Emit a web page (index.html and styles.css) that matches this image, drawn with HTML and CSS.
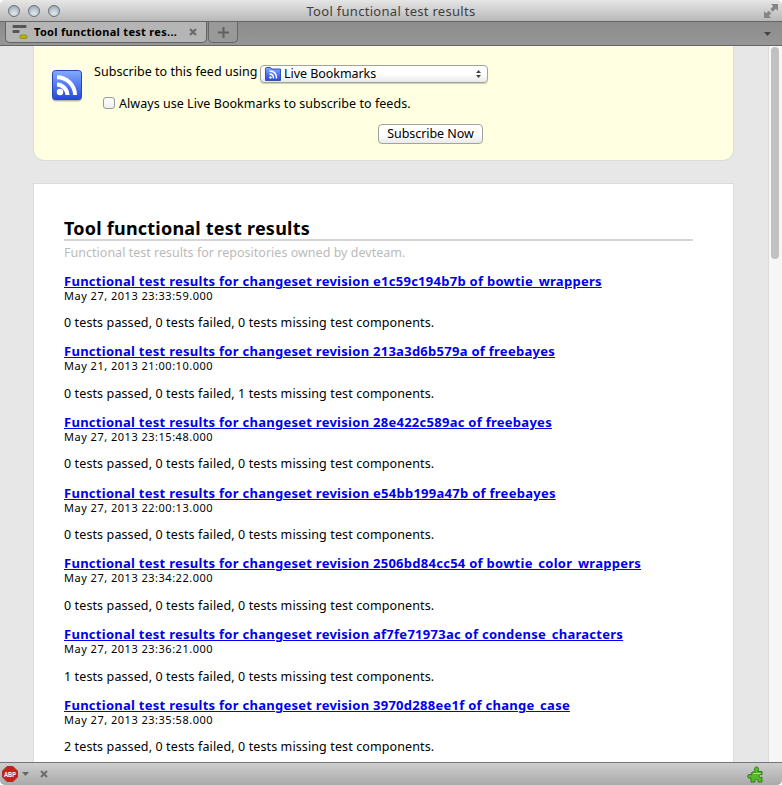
FILE: index.html
```html
<!DOCTYPE html>
<html lang="en">
<head>
<meta charset="utf-8">
<title>Tool functional test results</title>
<link rel="stylesheet" href="styles.css">
</head>
<body>
<div class="window">
  <header class="titlebar">
    <div class="lights"><i></i><i></i><i></i></div>
    <span class="window-title">Tool functional test results</span>
    <svg class="fullscreen" width="14" height="14" viewBox="0 0 14 14"><path d="M7 0h7v7l-2.200-2.200-3 3-2.600-2.600 3-3zM0 7l2.200 2.200 2.500-2.500 2.600 2.600-2.500 2.500L7 14H0z" fill="#858585"/></svg>
  </header>
  <nav class="tabs">
    <div class="tab">
      <svg width="16" height="16" viewBox="0 0 16 16"><rect x="0.500" y="1" width="14" height="3" rx="1" fill="#555"/><rect x="0.500" y="6" width="7" height="3" rx="1" fill="#555"/><rect x="8" y="11" width="7" height="3.500" rx="1.500" fill="#b9b400" stroke="#777000" stroke-width=".6"/></svg>
      <span class="tab-label">Tool functional test res...</span>
      <svg class="close" width="8" height="8" viewBox="0 0 8 8"><path d="M1 1l6 6M7 1l-6 6" stroke="#686868" stroke-width="2"/></svg>
    </div>
    <div class="new-tab"><svg width="11" height="11" viewBox="0 0 11 11"><path d="M5.500 0v11M0 5.500h11" stroke="#606060" stroke-width="2"/></svg></div>
    <svg class="all-tabs" width="7" height="4" viewBox="0 0 7 4"><path d="M0 0h7L3.500 4z" fill="#444"/></svg>
  </nav>
  <main class="viewport">
    <div class="page">
      <section class="subscribe">
        <svg class="feed-icon" width="32" height="34" viewBox="0 0 32 34">
          <defs><linearGradient id="blue" x2="0" y2="1"><stop stop-color="#83adff"/><stop offset="1" stop-color="#2746dd"/></linearGradient></defs>
          <rect x="1" y="2" width="30" height="30.500" rx="4" fill="#8c8c80" opacity=".6"/>
          <rect x="1.500" y="1.500" width="29" height="29" rx="3" fill="url(#blue)" stroke="#2447b8"/>
          <circle cx="9" cy="23" r="3.200" fill="#fff"/><path d="M6 15.500a11 11 0 0 1 10.500 10.500M6 8.200a18 18 0 0 1 18 17.800" fill="none" stroke="#fff" stroke-width="4"/>
        </svg>
        <div class="controls">
          <div class="feed-row">
            <span class="feed-label">Subscribe to this feed using</span>
            <div class="select">
              <svg width="16" height="14" viewBox="0 0 16 14"><path d="M.5 1.500q0-1 1-1h4l1 1.500h9v11.500H.5z" fill="url(#blue)" stroke="#3354b8"/><circle cx="5.500" cy="10.500" r="1.200" fill="#fff"/><path d="M4.500 7q4 0 4 4.500M4.500 4q7 0 7 7.500" fill="none" stroke="#fff" stroke-width="1.500"/></svg>
              <span class="select-label">Live Bookmarks</span>
              <svg class="arrows" width="5" height="8" viewBox="0 0 5 8"><path d="M0 3L2.500 0 5 3zM0 5h5L2.500 8z" fill="#444"/></svg>
            </div>
          </div>
          <div class="always"><i class="checkbox"></i><span class="always-label">Always use Live Bookmarks to subscribe to feeds.</span></div>
          <div class="button"><span>Subscribe Now</span></div>
        </div>
      </section>
      <article class="feed">
        <h1><span>Tool functional test results</span></h1>
        <p class="subtitle">Functional test results for repositories owned by devteam.</p>
        <section class="entry"><h2><a>Functional test results for changeset revision e1c59c194b7b of bowtie_wrappers</a></h2><time>May 27, 2013 23:33:59.000</time><p>0 tests passed, 0 tests failed, 0 tests missing test components.</p></section>
        <section class="entry"><h2><a>Functional test results for changeset revision 213a3d6b579a of freebayes</a></h2><time>May 21, 2013 21:00:10.000</time><p>0 tests passed, 0 tests failed, 1 tests missing test components.</p></section>
        <section class="entry"><h2><a>Functional test results for changeset revision 28e422c589ac of freebayes</a></h2><time>May 27, 2013 23:15:48.000</time><p>0 tests passed, 0 tests failed, 0 tests missing test components.</p></section>
        <section class="entry"><h2><a>Functional test results for changeset revision e54bb199a47b of freebayes</a></h2><time>May 27, 2013 22:00:13.000</time><p>0 tests passed, 0 tests failed, 0 tests missing test components.</p></section>
        <section class="entry"><h2><a>Functional test results for changeset revision 2506bd84cc54 of bowtie_color_wrappers</a></h2><time>May 27, 2013 23:34:22.000</time><p>0 tests passed, 0 tests failed, 0 tests missing test components.</p></section>
        <section class="entry"><h2><a>Functional test results for changeset revision af7fe71973ac of condense_characters</a></h2><time>May 27, 2013 23:36:21.000</time><p>1 tests passed, 0 tests failed, 0 tests missing test components.</p></section>
        <section class="entry"><h2><a>Functional test results for changeset revision 3970d288ee1f of change_case</a></h2><time>May 27, 2013 23:35:58.000</time><p>2 tests passed, 0 tests failed, 0 tests missing test components.</p></section>
      </article>
    </div>
    <div class="scrollbar"><div class="thumb"></div></div>
  </main>
  <footer class="statusbar">
    <svg width="16" height="16" viewBox="0 0 16 16"><path d="M5 .5h6L15.500 5v6L11 15.500H5L.5 11V5z" fill="#c92018" stroke="#a03028"/><text class="abp" x="2" y="11" textLength="12" lengthAdjust="spacingAndGlyphs">ABP</text></svg>
    <svg class="menu-arrow" width="7" height="4" viewBox="0 0 7 4"><path d="M0 0h7L3.500 4z" fill="#666"/></svg>
    <svg class="status-close" width="8" height="8" viewBox="0 0 8 8"><path d="M1 1l6 6M7 1l-6 6" stroke="#6c6c6c" stroke-width="2"/></svg>
    <svg class="puzzle" width="17" height="17" viewBox="0 0 17 17"><path d="M5 6h3.500C7 4 7 1 9.500 1s2.500 3 1.300 4.500H15v3.200c-2-.8-3 .2-3 1.300s1 2 3 1.300V16h-4c.3-2-.5-2.800-1.600-2.800S7.500 14 8 16H4v-4.200c-1.800 1-3.300.3-3.300-1.500S2.500 8 4.500 9z" fill="#58b82c" stroke="#2d7d17"/><path d="M6 7.500h7.500" stroke="#a4e36d"/></svg>
  </footer>
</div>
</body>
</html>
```
FILE: styles.css
```css
* { box-sizing: border-box; }
body { margin: 0; background: #fff; font: 12.5px/18px "Noto Sans", sans-serif; color: #000; }
svg { display: block; flex: none; }
span, time { white-space: nowrap; }
i { display: block; flex: none; }
.window { width: 782px; height: 785px; display: flex; flex-direction: column; overflow: hidden; border-radius: 5px; background: #e7e7e7; }
.titlebar { flex: none; height: 22px; display: grid; grid-template-columns: 1fr auto 1fr; align-items: center; padding: 0 8px 0 8px; background: linear-gradient(#e6e6e6, #b8b8b8); border-bottom: 1px solid #666; }
.lights { display: flex; gap: 8px; }
.lights i { width: 12px; height: 12px; border-radius: 50%; border: 1px solid #68717a; background: radial-gradient(circle at 50% 75%, #e3eaf0, #92a0ab); }
.window-title { font-size: 13px; letter-spacing: 0.29px; color: #404040; }
.fullscreen { justify-self: end; margin-right: -4px; }
.tabs { flex: none; height: 24px; display: flex; align-items: flex-start; background: linear-gradient(#8c8c8c, #969696); border-bottom: 1px solid #666; padding: 0 11px 0 5px; }
.tab { width: 202px; height: 21px; display: flex; align-items: center; padding: 0 9px 0 6px; background: #b5b5b5; border: 1px solid #626262; border-top: 0; border-radius: 0 0 5px 5px; }
.tab-label { margin-left: 6px; font-size: 11px; font-weight: 700; letter-spacing: 0.3px; }
.close { margin-left: auto; }
.new-tab { width: 30px; height: 21px; margin-left: 1px; display: flex; align-items: center; justify-content: center; background: #999; border: 1px solid #666; border-top: 0; border-radius: 0 0 5px 5px; }
.all-tabs { margin: 10px 0 0 auto; }
.viewport { flex: 1; min-height: 0; display: flex; overflow: hidden; }
.page { flex: 1; padding-left: 33px; }
.subscribe { width: 701px; height: 115px; display: flex; padding: 19px 17px; background: #ffffe1; border: 1px solid #dcdcdc; border-top: 0; border-radius: 0 0 11px 11px; }
.feed-icon { margin-top: 4px; }
.controls { margin-left: 11px; width: 394px; letter-spacing: 0.04px; }
.feed-row { display: flex; justify-content: space-between; height: 19px; }
.feed-label { margin-top: -2px; }
.select { width: 228px; height: 18px; display: flex; align-items: center; padding: 0 6px 0 4px; background: linear-gradient(#fff 50%, #e9e9e9); border: 1px solid #a3a39b; border-radius: 4px; box-shadow: 0 1px 1px #ccccb0; }
.select-label { margin-left: 3px; letter-spacing: -0.05px; }
.arrows { margin-left: auto; }
.always { display: flex; align-items: center; height: 18px; margin-top: 11px; padding-left: 9px; }
.checkbox { width: 12px; height: 12px; border: 1px solid #999; border-radius: 3px; background: linear-gradient(#fff, #eee); transform: translateY(-1px); }
.always-label { margin-left: 4px; }
.button { width: 105px; height: 20px; margin: 11px 0 0 284px; display: flex; align-items: center; justify-content: center; border: 1px solid #a3a39b; border-radius: 4px; background: linear-gradient(#fff 50%, #eaeaea); letter-spacing: -0.05px; }
.feed { width: 701px; height: 700px; margin-top: 22px; padding: 34px 40px 0 30px; background: #fff; border: 1px solid #dcdcdc; }
h1 { margin: 0; height: 23px; font-size: 18px; line-height: 21px; letter-spacing: 0.22px; border-bottom: 2px solid #d5d5d5; }
.subtitle { margin: 3px 0 10.7px; color: #bbb; letter-spacing: 0.02px; }
.entry { height: 70.7px; }
h2 { margin: 0; font-size: 13px; line-height: 16px; white-space: nowrap; letter-spacing: 0.27px; }
h2 a { color: #00e; text-decoration: underline; }
time { display: block; font-size: 11px; line-height: 14px; letter-spacing: 0.5px; }
.entry p { margin: 11.4px 0 0; letter-spacing: 0.11px; }
.scrollbar { width: 14px; background: #f6f6f6; border-left: 1px solid #dcdcdc; padding: 1px 3px 0 2px; }
.thumb { width: 8px; height: 212px; border-radius: 4px; background: #c1c1c1; }
.statusbar { flex: none; height: 23px; display: flex; align-items: center; padding: 0 18px 0 2px; background: linear-gradient(#cecece, #aaa); border-top: 1px solid #777; }
.abp { font: 700 7px "Liberation Sans", sans-serif; fill: #fff; }
.menu-arrow { margin-left: 4px; }
.status-close { margin-left: 11px; }
.puzzle { margin-left: auto; }
```
